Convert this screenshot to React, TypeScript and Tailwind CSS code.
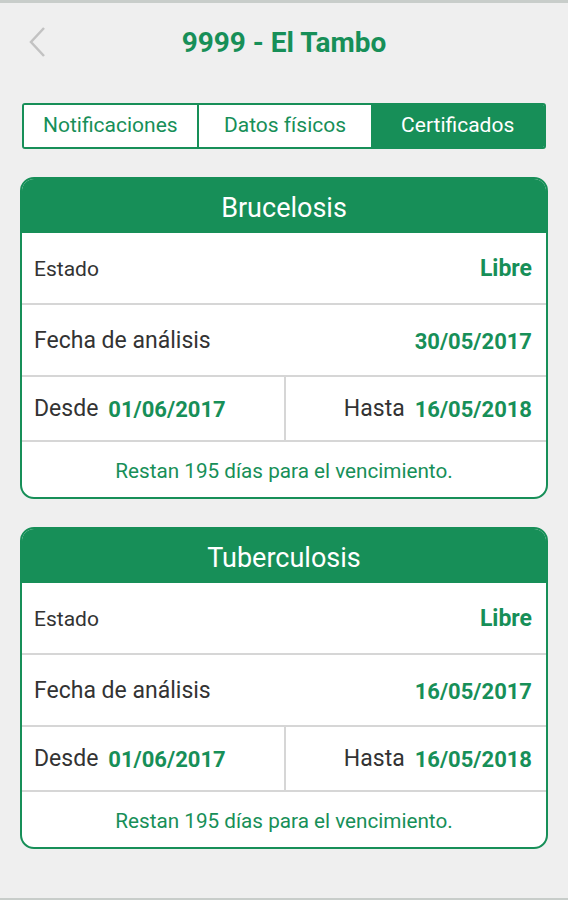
import React from 'react';

const font = { fontFamily: 'Roboto, "Noto Sans", sans-serif' };

interface CertProps {
  title: string;
  estado: string;
  fecha: string;
  desde: string;
  hasta: string;
  dias: number;
}

const CertCard: React.FC<CertProps> = ({ title, estado, fecha, desde, hasta, dias }) => {
  return (
    <div className="mx-[20px] rounded-[14px] border-2 border-[#178f58] bg-white overflow-hidden">
      <div className="h-[54px] pt-[4px] bg-[#178f58] flex items-center justify-center text-white text-[27px]">
        {title}
      </div>
      <div className="h-[72px] pt-[3px] flex items-center justify-between pr-[14px] pl-[12px] border-b-2 border-[#d6d6d6]">
        <span className="text-[21px] text-[#333]">Estado</span>
        <span className="text-[23px] font-bold text-[#178f58]">{estado}</span>
      </div>
      <div className="h-[72px] pt-[2px] flex items-center justify-between pr-[14px] pl-[12px] border-b-2 border-[#d6d6d6]">
        <span className="text-[23px] text-[#333]">Fecha de análisis</span>
        <span className="text-[22px] font-bold text-[#178f58]">{fecha}</span>
      </div>
      <div className="h-[65px] grid grid-cols-[264px_1fr] border-b-2 border-[#d6d6d6]">
        <div className="flex items-center gap-[10px] pt-[2px] pl-[12px] border-r-2 border-[#d6d6d6]">
          <span className="text-[23px] text-[#333]">Desde</span>
          <span className="text-[22px] font-bold text-[#178f58]">{desde}</span>
        </div>
        <div className="flex items-center justify-end gap-[10px] pt-[2px] pr-[14px]">
          <span className="text-[23px] text-[#333]">Hasta</span>
          <span className="text-[22px] font-bold text-[#178f58]">{hasta}</span>
        </div>
      </div>
      <div className="h-[55px] pt-[4px] flex items-center justify-center text-[20.7px] text-[#178f58]">
        Restan {dias} días para el vencimiento.
      </div>
    </div>
  );
};

const App = () => {
  const tabs = ['Notificaciones', 'Datos físicos', 'Certificados'];
  const active = 2;

  return (
    <div className="w-[568px] h-[900px] bg-[#efefef] flex flex-col" style={font}>
      <div className="h-[3px] bg-[#c8cdca]" />
      <div className="h-[80px] relative flex items-center justify-center">
        <svg className="absolute left-[26px] top-[23px]" width="20" height="32" viewBox="0 0 20 32">
          <path d="M18 2 L5 16 L18 30" fill="none" stroke="#c2c2c2" strokeWidth="2.5" />
        </svg>
        <h1 className="text-[28px] font-bold text-[#178f58]">9999 - El Tambo</h1>
      </div>
      <div className="mt-[20px] mx-[22px] h-[46px] flex rounded-[3px] border-2 border-[#178f58] overflow-hidden">
        {tabs.map((t, i) => (
          <div
            key={t}
            className={
              i === active
                ? 'flex-1 flex items-center justify-center bg-[#178f58] text-white text-[21px]'
                : i === 0
                ? 'flex-1 flex items-center justify-center bg-white text-[#178f58] text-[21px] border-r-2 border-[#178f58]'
                : 'flex-1 flex items-center justify-center bg-white text-[#178f58] text-[21px]'
            }
          >
            {t}
          </div>
        ))}
      </div>
      <div className="mt-[28px] flex flex-col gap-[28px]">
        <CertCard title="Brucelosis" estado="Libre" fecha="30/05/2017" desde="01/06/2017" hasta="16/05/2018" dias={195} />
        <CertCard title="Tuberculosis" estado="Libre" fecha="16/05/2017" desde="01/06/2017" hasta="16/05/2018" dias={195} />
      </div>
      <div className="flex-1" />
      <div className="h-[2px] bg-[#c8cdca]" />
    </div>
  );
};

export default App;
